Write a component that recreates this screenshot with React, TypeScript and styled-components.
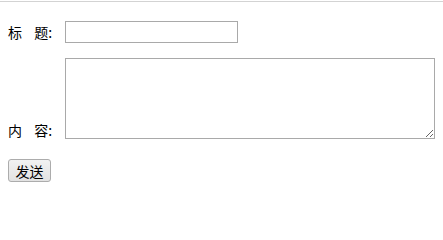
import React, { useState } from "react";
import styled, { createGlobalStyle } from "styled-components";

const GlobalStyle = createGlobalStyle`
    body {
        margin: 0;
        background: #ffffff;
        font-family: "Noto Sans CJK SC", "Liberation Sans", sans-serif;
        color: #000000;
    }
`;

const TopRule = styled.div`
    margin-top: 1px;
    height: 1px;
    background: #d3d3d3;
`;

const StyledForm = styled.form`
    display: flex;
    flex-direction: column;
    padding: 19px 8px 0 8px;
`;

const Row = styled.div<{ $align: "center" | "flex-end" }>`
    display: flex;
    align-items: ${(p) => p.$align};
    margin-bottom: ${(p) => (p.$align === "center" ? "15px" : "20px")};
`;

const Label = styled.label<{ $lift?: number }>`
    width: 57px;
    flex-shrink: 0;
    font-size: 14px;
    line-height: 20px;
    word-spacing: 9px;
    white-space: nowrap;
    margin-bottom: ${(p) => p.$lift ?? 0}px;
`;

const TitleInput = styled.input`
    box-sizing: border-box;
    width: 173px;
    height: 22px;
    margin: 0;
    padding: 1px 3px;
    border: 1px solid #a9a9a9;
    font-size: 13px;
    outline: none;
`;

const ContentArea = styled.textarea`
    box-sizing: border-box;
    width: 373px;
    height: 81px;
    margin: 0;
    padding: 2px;
    border: 1px solid #a9a9a9;
    font-size: 13px;
    outline: none;
`;

const SendButton = styled.button`
    align-self: flex-start;
    box-sizing: border-box;
    width: 43px;
    height: 23px;
    padding: 0;
    border: 1px solid #acacac;
    border-radius: 3px;
    background: linear-gradient(#f2f2f2, #e2e2e2);
    font-family: "Noto Sans CJK SC", sans-serif;
    font-size: 14px;
    line-height: 20px;
    color: #000000;
    cursor: pointer;
`;

const App = () => {
    const [title, setTitle] = useState("");
    const [content, setContent] = useState("");

    return (
        <>
            <GlobalStyle />
            <TopRule />
            <StyledForm onSubmit={(e) => e.preventDefault()}>
                <Row $align="center">
                    <Label>标 题:</Label>
                    <TitleInput value={title} onChange={(e) => setTitle(e.target.value)} />
                </Row>
                <Row $align="flex-end">
                    <Label $lift={-1}>内 容:</Label>
                    <ContentArea value={content} onChange={(e) => setContent(e.target.value)} />
                </Row>
                <SendButton type="submit">发送</SendButton>
            </StyledForm>
        </>
    );
};

export default App;
